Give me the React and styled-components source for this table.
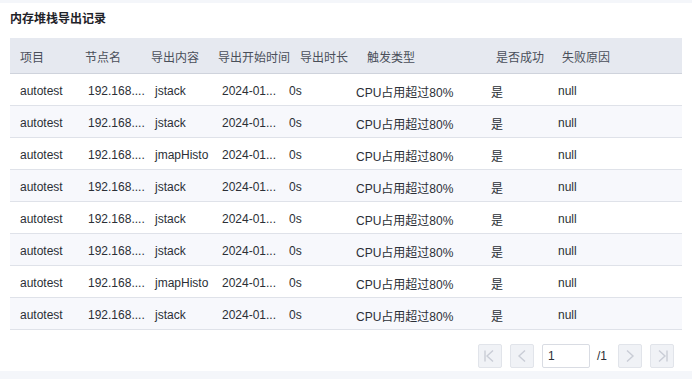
import React from 'react';
import styled, { createGlobalStyle } from 'styled-components';

const GlobalStyle = createGlobalStyle`
  html, body {
    margin: 0;
    padding: 0;
    background: #f4f6fa;
    font-family: "Liberation Sans", "Noto Sans CJK SC", sans-serif;
  }
`;

const headCols = '65px 66px 67px 82px 67px 129px 66px 1fr';
const bodyCols = '68px 67px 67px 67px 67px 135px 67px 1fr';

const headers = ['项目', '节点名', '导出内容', '导出开始时间', '导出时长', '触发类型', '是否成功', '失败原因'];

const rows = [
  'jstack', 'jstack', 'jmapHisto', 'jstack', 'jstack', 'jstack', 'jmapHisto', 'jstack'
].map((content) => ['autotest', '192.168....', content, '2024-01...', '0s', 'CPU占用超过80%', '是', 'null']);

const Chevron = ({ dir, bar }) => (
  <svg width="16" height="16" viewBox="0 0 16 16" fill="none" stroke="#c9cdd6" strokeWidth="1.4">
    {dir === 'left' ? <path d="M11 2.5 L5 8 L11 13.5" /> : <path d="M5 2.5 L11 8 L5 13.5" />}
    {bar && (dir === 'left' ? <path d="M3 2.5 V13.5" /> : <path d="M13 2.5 V13.5" />)}
  </svg>
);

const App = () => (
  <>
    <GlobalStyle />
    <Card>
      <Title>内存堆栈导出记录</Title>
      <HeadRow>
        {headers.map((h) => (
          <HeadCell key={h}>{h}</HeadCell>
        ))}
      </HeadRow>
      {rows.map((r, i) => (
        <BodyRow key={i} $striped={i % 2 === 1}>
          {r.map((c, j) => (
            <BodyCell key={j}>{c}</BodyCell>
          ))}
        </BodyRow>
      ))}
      <Pager>
        <PageButton><Chevron dir="left" bar /></PageButton>
        <PageButton><Chevron dir="left" /></PageButton>
        <PageInput defaultValue="1" />
        <PageTotal>/1</PageTotal>
        <PageButton><Chevron dir="right" /></PageButton>
        <PageButton><Chevron dir="right" bar /></PageButton>
      </Pager>
    </Card>
  </>
);

export default App;

const Card = styled.div`
  margin-top: 3px;
  height: 368px;
  background: #fff;
  padding: 0 10px;
  box-sizing: border-box;
`;

const Title = styled.div`
  height: 35px;
  line-height: 32px;
  font-size: 12px;
  font-weight: 700;
  color: #1f2329;
`;

const HeadRow = styled.div`
  display: grid;
  grid-template-columns: ${headCols};
  height: 36px;
  background: #e6e9f0;
  border-bottom: 1px solid #cfd3dc;
  box-sizing: border-box;
  align-items: center;
`;

const HeadCell = styled.div`
  padding: 1px 0 0 10px;
  font-size: 12px;
  color: #4a4f5a;
  white-space: nowrap;
`;

const BodyRow = styled.div`
  display: grid;
  grid-template-columns: ${bodyCols};
  height: 32px;
  background: ${(p) => (p.$striped ? '#f7f8fc' : '#fff')};
  border-bottom: 1px solid #dfe2e9;
  box-sizing: border-box;
  align-items: center;
`;

const BodyCell = styled.div`
  padding: 3px 0 0 10px;
  font-size: 12px;
  color: #2b2f36;
  white-space: nowrap;
`;

const Pager = styled.div`
  display: flex;
  justify-content: flex-end;
  align-items: center;
  gap: 8px;
  margin-top: 14px;
  padding-right: 8px;
`;

const PageButton = styled.div`
  width: 24px;
  height: 24px;
  box-sizing: border-box;
  border: 1px solid #e1e4ea;
  border-radius: 2px;
  background: #f0f2f6;
  display: flex;
  align-items: center;
  justify-content: center;
`;

const PageInput = styled.input`
  width: 48px;
  height: 24px;
  box-sizing: border-box;
  border: 1px solid #d9dce3;
  border-radius: 2px;
  padding: 0 5px;
  font-size: 12px;
  font-family: inherit;
  color: #2b2f36;
  outline: none;
`;

const PageTotal = styled.span`
  font-size: 12px;
  color: #2b2f36;
  margin: 0 3px 0 -1px;
`;
